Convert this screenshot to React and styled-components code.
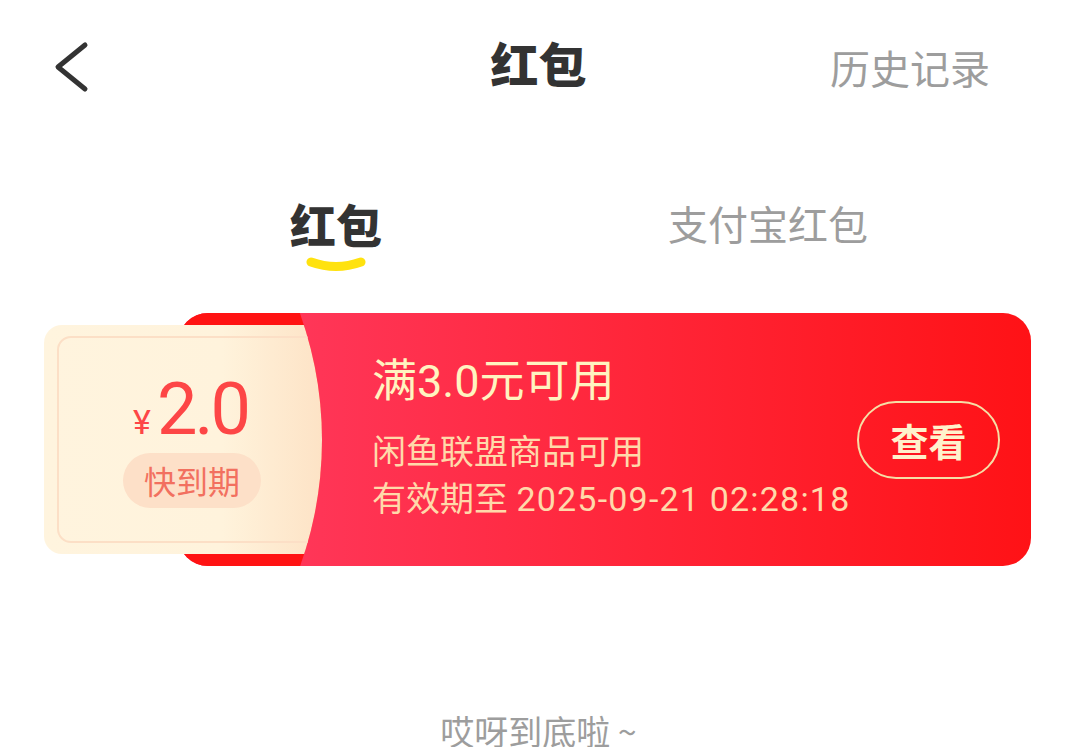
import React from "react";
import styled, { createGlobalStyle } from "styled-components";

const Global = createGlobalStyle`
  html, body { margin: 0; padding: 0; background: #fff; }
  body { font-family: "Noto Sans CJK SC", "Noto Sans", sans-serif; }
  #root { width: 1077px; }
`;

const Page = styled.div`
  width: 1077px;
  min-height: 747px;
  background: #fff;
  overflow: hidden;
`;

const Header = styled.header`
  display: grid;
  grid-template-columns: 1fr auto 1fr;
  align-items: center;
  height: 134px;
  padding: 0 87px;
  box-sizing: border-box;
`;

const BackButton = styled.button`
  justify-self: start;
  margin-left: -37px;
  display: flex;
  padding: 0;
  border: 0;
  background: none;
  width: 44px;
  height: 56px;
`;

const Title = styled.h1`
  margin: 0 0 10px;
  font-size: 48px;
  line-height: 56px;
  font-weight: 900;
  color: #333;
`;

const HistoryLink = styled.span`
  justify-self: end;
  font-size: 40px;
  line-height: 56px;
  color: #9d9d9d;
`;

const Tabs = styled.nav`
  display: flex;
  align-items: flex-start;
  gap: 286px;
  padding-left: 290px;
  margin-top: 61px;
`;

const Tab = styled.div`
  display: flex;
  flex-direction: column;
  align-items: center;
`;

const TabLabel = styled.span`
  font-size: ${(p) => (p.$active ? "46px" : "40px")};
  font-weight: ${(p) => (p.$active ? 900 : 400)};
  color: ${(p) => (p.$active ? "#333" : "#9d9d9d")};
  line-height: 56px;
`;

const Smile = styled.svg`
  display: block;
  margin-top: 6px;
`;

const Card = styled.section`
  display: grid;
  grid-template-columns: 134px 144px 1fr;
  grid-template-rows: 253px;
  margin: 40px 46px 0 44px;
`;

const RedCard = styled.div`
  grid-column: 2 / 4;
  grid-row: 1;
  border-radius: 30px 28px 28px 30px;
  background: linear-gradient(90deg, #ff3658 0px, #ff3658 122px, #ff2538 55%, #ff1216 100%);
`;

const Stub = styled.div`
  grid-column: 2;
  grid-row: 1;
  border-radius: 30px 0 0 30px;
  background: #ff1313;
  clip-path: circle(375px at -231px 127px);
`;

const Ticket = styled.div`
  grid-column: 1 / 3;
  grid-row: 1;
  align-self: center;
  height: 229px;
  box-sizing: border-box;
  padding: 11px 0 11px 13px;
  border-radius: 18px;
  background: linear-gradient(90deg, #fff4de 0%, #fff3dc 64%, #fde3c6 100%);
  clip-path: circle(375px at -97px 115px);
  display: flex;
`;

const Frame = styled.div`
  flex: none;
  width: 270px;
  box-sizing: border-box;
  border: 2px solid #fcdfc6;
  border-radius: 14px;
  display: flex;
  flex-direction: column;
  align-items: center;
  padding-top: 36px;
`;

const Amount = styled.div`
  display: flex;
  align-items: baseline;
  color: #fd4646;
  font-family: Roboto, "Noto Sans", sans-serif;
`;

const Yen = styled.span`
  font-size: 34px;
  margin-right: 6px;
`;

const AmountValue = styled.span`
  font-size: 72px;
  line-height: 72px;
  letter-spacing: -3px;
  margin-right: 3px;
`;

const Pill = styled.span`
  margin-top: 7px;
  height: 55px;
  padding: 0 21px;
  border-radius: 28px;
  background: #fde0c8;
  color: #f2705f;
  font-size: 32px;
  line-height: 55px;
`;

const Content = styled.div`
  grid-column: 3;
  grid-row: 1;
  display: flex;
  align-items: center;
  padding: 0 31px 0 50px;
  font-family: Roboto, "Noto Sans CJK SC", sans-serif;
`;

const Info = styled.div`
  display: flex;
  flex-direction: column;
`;

const Condition = styled.div`
  font-size: 45px;
  line-height: 50px;
  color: #fff4c0;
  margin-bottom: 22px;
`;

const Detail = styled.div`
  font-size: 34px;
  line-height: 47px;
  color: #ffd9aa;
`;

const DateText = styled.span`
  letter-spacing: 1.2px;
`;

const ViewButton = styled.button`
  margin-left: auto;
  width: 143px;
  height: 78px;
  box-sizing: border-box;
  border: 2px solid #f6dea6;
  border-radius: 40px;
  background: transparent;
  color: #fff2cc;
  font-family: "Noto Sans CJK SC", sans-serif;
  font-size: 38px;
  font-weight: 700;
  display: flex;
  align-items: center;
  justify-content: center;
  padding: 0;
`;

const Footer = styled.div`
  margin-top: 143px;
  text-align: center;
  font-size: 34px;
  line-height: 44px;
  color: #9d9d9d;
`;

export default function App() {
  return (
    <Page>
      <Global />
      <Header>
        <BackButton aria-label="返回">
          <svg width="44" height="56" viewBox="0 0 44 56">
            <path d="M35 6 L8 28 L35 50" fill="none" stroke="#333" strokeWidth="5" strokeLinecap="round" strokeLinejoin="round" />
          </svg>
        </BackButton>
        <Title>红包</Title>
        <HistoryLink>历史记录</HistoryLink>
      </Header>

      <Tabs>
        <Tab>
          <TabLabel $active>红包</TabLabel>
          <Smile width="62" height="16" viewBox="0 0 62 16">
            <path d="M6 5 Q31 14 56 5" fill="none" stroke="#ffe20f" strokeWidth="9" strokeLinecap="round" />
          </Smile>
        </Tab>
        <Tab>
          <TabLabel>支付宝红包</TabLabel>
        </Tab>
      </Tabs>

      <Card>
        <RedCard />
        <Stub />
        <Ticket>
          <Frame>
            <Amount>
              <Yen>¥</Yen>
              <AmountValue>2.0</AmountValue>
            </Amount>
            <Pill>快到期</Pill>
          </Frame>
        </Ticket>
        <Content>
          <Info>
            <Condition>满3.0元可用</Condition>
            <Detail>闲鱼联盟商品可用</Detail>
            <Detail>
              有效期至 <DateText>2025-09-21 02:28:18</DateText>
            </Detail>
          </Info>
          <ViewButton>查看</ViewButton>
        </Content>
      </Card>

      <Footer>哎呀到底啦 ~</Footer>
    </Page>
  );
}
